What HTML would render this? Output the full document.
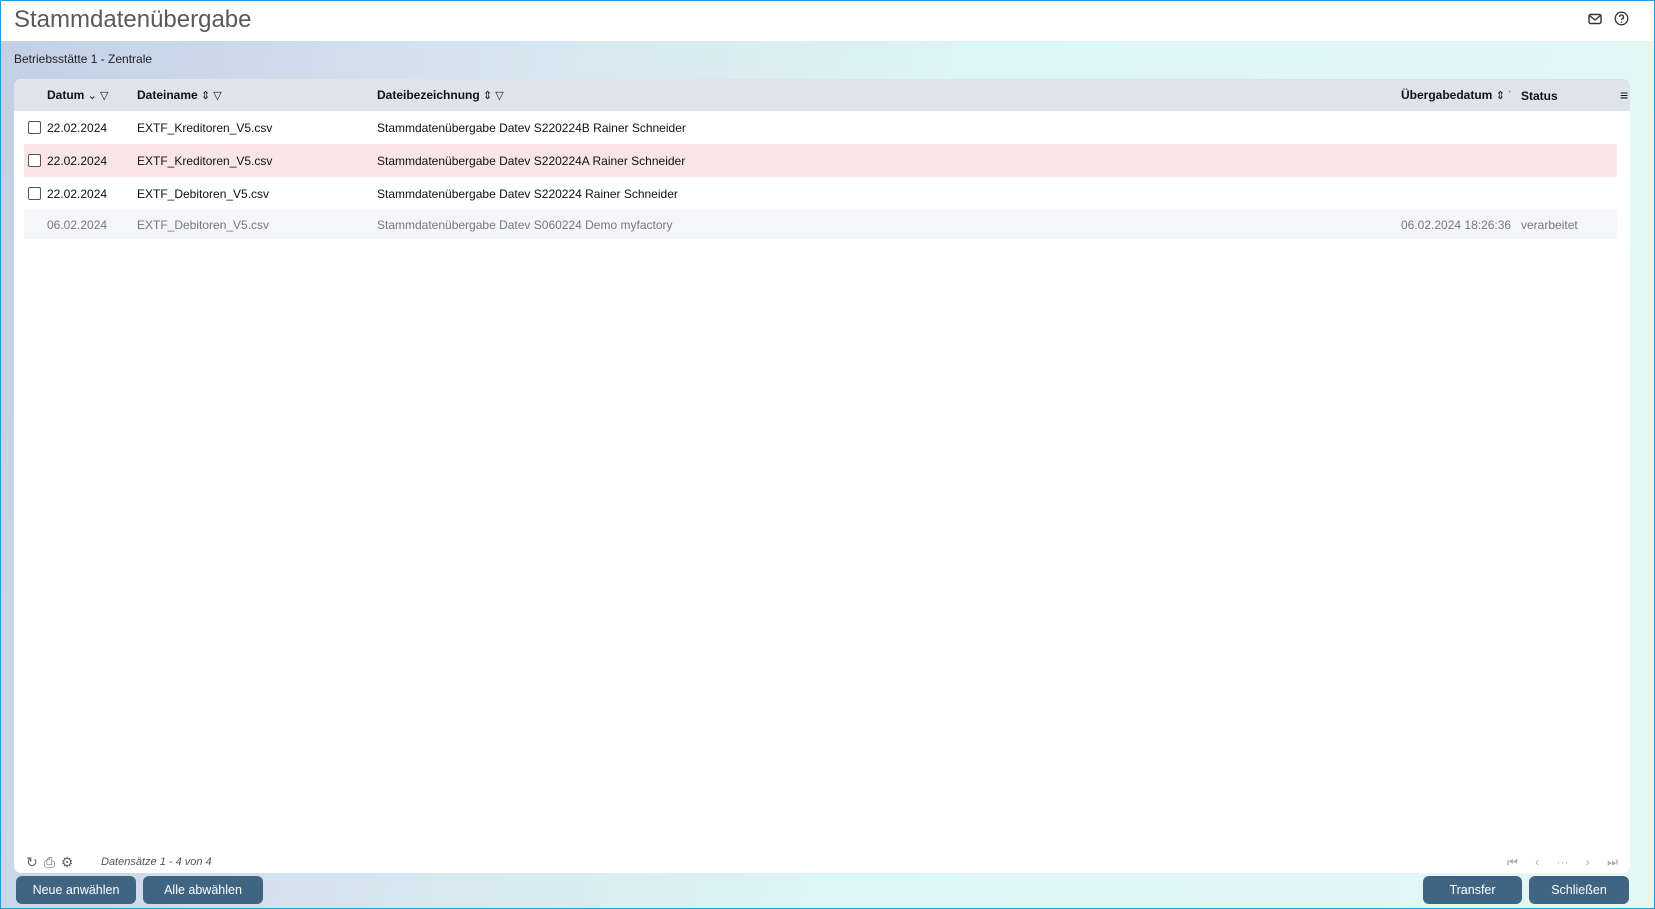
<!DOCTYPE html>
<html><head><meta charset="utf-8"><style>
*{box-sizing:border-box;margin:0;padding:0}
body{width:1655px;height:909px;overflow:hidden;font-family:"Liberation Sans",Arial,sans-serif;font-size:13px;color:#111;position:relative;background:linear-gradient(100deg,#c3cfe6 0%,#d6e2ee 25%,#dcf6f7 55%,#e4f8f5 100%);border:1px solid #1b9de0}
.hdr{position:absolute;left:0;top:0;width:1653px;height:40px;background:#fff}
.title{position:absolute;left:13px;top:5px;font-size:24px;color:#5a5a5a}
.sub{position:absolute;left:13px;top:51px;font-size:12px;color:#222}
.card{position:absolute;left:13px;top:78px;width:1616px;height:794px;background:#fff;border-radius:7px;overflow:hidden}
.th{position:absolute;left:0;top:0;width:100%;height:32px;background:#dfe3ea}
.th span{position:absolute;top:9px;font-weight:bold;font-size:12px;color:#111}
.ic{color:#b0b4bd;font-weight:normal!important;font-size:11px!important}
.row{position:absolute;left:10px;width:1593px;height:33px}
.row span{position:absolute;top:10px;font-size:12px}
.cb{position:absolute;left:4px;top:10px;width:13px;height:13px;border:1px solid #555;border-radius:2px;background:#fff}
.btn{position:absolute;top:875px;height:28px;background:#3f6583;color:#fff;border-radius:6px;font-size:12.5px;text-align:center;line-height:28px}
.g{color:#777}
</style></head><body>
<div class="hdr"><div class="title">Stammdatenübergabe</div>
<svg style="position:absolute;left:1587px;top:12px" width="14" height="12" viewBox="0 0 14 12"><rect x="1" y="1.5" width="12" height="9" rx="1.5" fill="none" stroke="#333" stroke-width="1.4"/><path d="M1.5 2.5L7 7l5.5-4.5" fill="none" stroke="#333" stroke-width="1.4"/></svg>
<svg style="position:absolute;left:1613px;top:10px" width="15" height="15" viewBox="0 0 15 15"><circle cx="7.5" cy="7.5" r="6.3" fill="none" stroke="#333" stroke-width="1.3"/><path d="M5.5 6a2 2 0 1 1 2.6 1.9c-.5.2-.6.5-.6 1.1" fill="none" stroke="#333" stroke-width="1.3"/><circle cx="7.5" cy="11" r=".8" fill="#333"/></svg>
</div>
<div class="sub">Betriebsstätte 1 - Zentrale</div>
<div class="card">
<div class="th">
<span style="left:33px">Datum <span class="ic" style="position:static">⌄ ▽</span></span>
<span style="left:123px">Dateiname <span class="ic" style="position:static">⇕ ▽</span></span>
<span style="left:363px">Dateibezeichnung <span class="ic" style="position:static">⇕ ▽</span></span>
<span style="left:1387px">Übergabedatum <span class="ic" style="position:static">⇕ ˈ</span></span>
<span style="left:1507px;top:10px">Status</span>
<span class="ic" style="left:1606px;top:8px;font-size:14px!important">≡</span>
</div>
<div class="row" style="top:32px"><div class="cb"></div><span style="left:23px">22.02.2024</span><span style="left:113px">EXTF_Kreditoren_V5.csv</span><span style="left:353px">Stammdatenübergabe Datev S220224B Rainer Schneider</span></div>
<div class="row" style="top:65px;background:#f9e6e4"><div class="cb"></div><span style="left:23px">22.02.2024</span><span style="left:113px">EXTF_Kreditoren_V5.csv</span><span style="left:353px">Stammdatenübergabe Datev S220224A Rainer Schneider</span></div>
<div class="row" style="top:98px"><div class="cb"></div><span style="left:23px">22.02.2024</span><span style="left:113px">EXTF_Debitoren_V5.csv</span><span style="left:353px">Stammdatenübergabe Datev S220224 Rainer Schneider</span></div>
<div class="row g" style="top:131px;height:29px;background:#f5f6f9"><span style="left:23px;top:8px">06.02.2024</span><span style="left:113px;top:8px">EXTF_Debitoren_V5.csv</span><span style="left:353px;top:8px">Stammdatenübergabe Datev S060224 Demo myfactory</span><span style="left:1377px;top:8px">06.02.2024 18:26:36</span><span style="left:1497px;top:8px">verarbeitet</span></div>
<div style="position:absolute;left:12px;top:775px;color:#666;font-size:14px;letter-spacing:6px">↻⎙⚙</div>
<div style="position:absolute;left:87px;top:777px;font-style:italic;font-size:11px;color:#555">Datensätze 1 - 4 von 4</div>
<div style="position:absolute;left:1493px;top:776px;color:#aab;font-size:12px;word-spacing:14px">⏮ ‹ ··· › ⏭</div>
</div>
<div class="btn" style="left:15px;width:120px">Neue anwählen</div>
<div class="btn" style="left:142px;width:120px">Alle abwählen</div>
<div class="btn" style="left:1422px;width:99px">Transfer</div>
<div class="btn" style="left:1528px;width:100px">Schließen</div>
</body></html>
